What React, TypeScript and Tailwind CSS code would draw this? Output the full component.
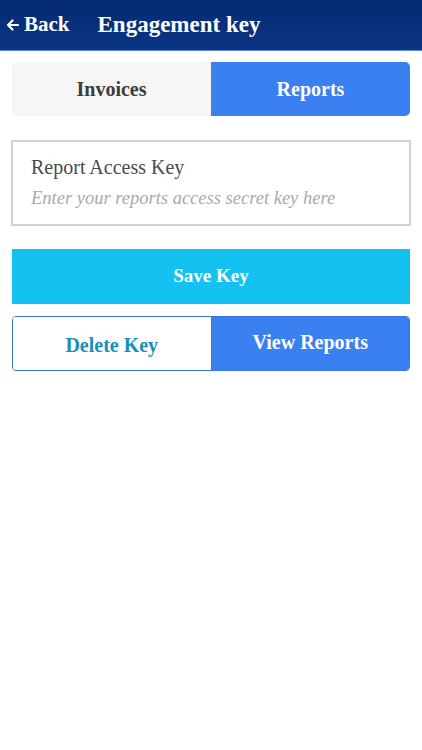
import { useState } from "react";

const serif = { fontFamily: '"Liberation Serif", "DejaVu Serif", serif' };

export default function App() {
  const [tab, setTab] = useState<"invoices" | "reports">("reports");
  const [key, setKey] = useState("");

  return (
    <div className="min-h-[750px] w-full bg-white" style={serif}>
      {/* header */}
      <div className="flex h-[51px] items-center gap-[28px] border-b border-[#5d86d6] bg-gradient-to-b from-[#052a73] to-[#0a3583] px-[6px] text-white">
        <button className="flex items-center gap-[5px] text-[21px] font-bold">
          <svg width="13" height="12" viewBox="0 0 13 12" fill="none">
            <path d="M12 6H2M6.5 1.5 2 6l4.5 4.5" stroke="white" strokeWidth="2.2" strokeLinecap="round" strokeLinejoin="round" />
          </svg>
          Back
        </button>
        <h1 className="text-[23px] font-bold">Engagement key</h1>
      </div>

      <div className="px-[12px]">
        {/* tabs */}
        <div className="mt-[11px] flex h-[54px] overflow-hidden rounded-[5px]">
          <button
            onClick={() => setTab("invoices")}
            className={`flex-1 text-[20px] font-bold ${tab === "invoices" ? "bg-[#3b80f0] text-white" : "bg-[#f6f6f6] text-[#3c3c3c]"}`}
          >
            Invoices
          </button>
          <button
            onClick={() => setTab("reports")}
            className={`flex-1 text-[20px] font-bold ${tab === "reports" ? "bg-[#3b80f0] text-white" : "bg-[#f6f6f6] text-[#3c3c3c]"}`}
          >
            Reports
          </button>
        </div>

        {/* key input */}
        <div className="mt-[24px] -mx-px flex h-[86px] flex-col border-2 border-[#d2d2d2] px-[18px] pt-[10px]">
          <label className="text-[20px] text-[#4a4a4a]">Report Access Key</label>
          <input
            value={key}
            onChange={(e) => setKey(e.target.value)}
            placeholder="Enter your reports access secret key here"
            className="mt-[3px] bg-transparent text-[18.5px] italic text-[#444] outline-none placeholder:text-[#aaaaaa]"
            style={serif}
          />
        </div>

        {/* actions */}
        <button className="mt-[23px] h-[55px] w-full bg-[#13c2f0] text-[19px] font-bold text-white">
          Save Key
        </button>

        <div className="mt-[12px] flex h-[55px] overflow-hidden rounded-[4px] border-[1.5px] border-[#3a72e2]">
          <button className="flex-1 bg-white pt-[3px] text-[20px] font-bold text-[#1a8db8]">Delete Key</button>
          <button className="flex-1 border-l-[1.5px] border-[#3a72e2] bg-[#3b80f0] pb-[3px] text-[20px] font-bold text-white">
            View Reports
          </button>
        </div>
      </div>
    </div>
  );
}
